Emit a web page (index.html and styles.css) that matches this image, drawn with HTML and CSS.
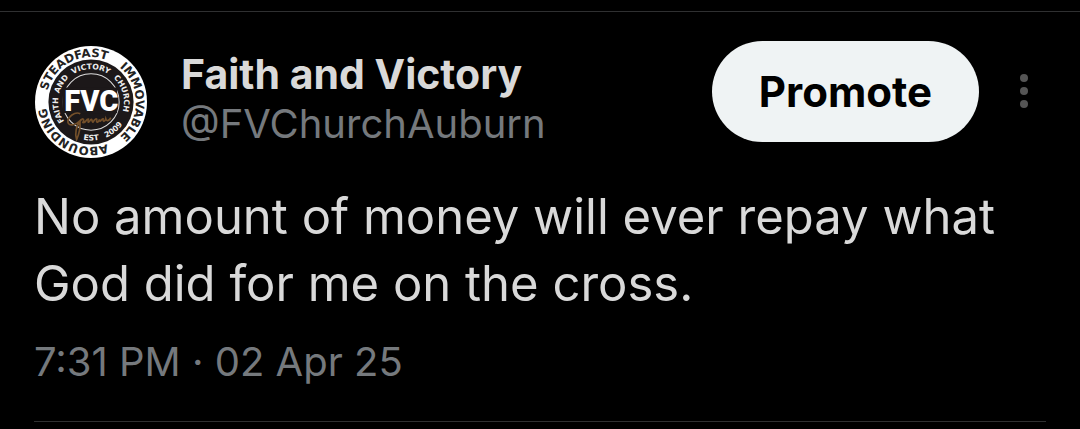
FILE: index.html
```html
<!DOCTYPE html>
<html lang="en">
<head>
<meta charset="utf-8">
<meta name="viewport" content="width=device-width, initial-scale=1">
<title>Faith and Victory</title>
<link rel="stylesheet" href="styles.css">
</head>
<body>
<article class="post">
  <header class="post-header">
    <svg class="avatar" viewBox="15 20 334 334" role="img" aria-label="Faith and Victory Church logo">
      <defs>
        <path id="outer" d="M182 321 A134 134 0 0 1 182 53 A134 134 0 0 1 182 321 A134 134 0 0 1 182 53"/>
        <path id="inner" d="M182 285 A98 98 0 0 1 182 89 A98 98 0 0 1 182 285"/>
        <path id="lower" d="M67 187 A115 115 0 0 0 297 187"/>
      </defs>
      <circle class="seal-light" cx="182" cy="187" r="167"/>
      <circle class="seal-dark" cx="182" cy="187" r="127"/>
      <circle class="seal-line" cx="182" cy="187" r="84"/>
      <g class="seal-motto">
        <text><textPath href="#outer" startOffset="357">STEADFAST</textPath></text>
        <text><textPath href="#outer" startOffset="631">IMMOVABLE</textPath></text>
        <text><textPath href="#outer" startOffset="914">ABOUNDING</textPath></text>
      </g>
      <g class="seal-name">
        <text><textPath href="#inner" startOffset="130">FAITH</textPath></text>
        <text><textPath href="#inner" startOffset="207">AND</textPath></text>
        <text><textPath href="#inner" startOffset="307">VICTORY</textPath></text>
        <text><textPath href="#inner" startOffset="435">CHURCH</textPath></text>
        <text><textPath href="#lower" startOffset="181">EST</textPath></text>
        <text><textPath href="#lower" startOffset="258">2009</textPath></text>
      </g>
      <rect class="seal-dark" x="96" y="144" width="164" height="76"/>
      <text class="seal-initials" x="183" y="214">FVC</text>
      <path class="seal-script" d="M150 222 C134 214 112 232 113 247 C116 262 139 254 149 243 C151 263 145 286 139 299 C133 283 138 256 150 244 C157 232 163 239 158 248 C167 251 167 237 174 238 C172 247 173 252 180 241 C187 233 184 248 188 247 C193 237 201 233 199 242 C197 250 205 249 207 239 C209 253 213 235 218 237 C217 248 224 246 226 237 C229 247 237 241 241 234"/>
    </svg>
    <div class="author">
      <a class="author-name" href="#">Faith and Victory</a>
      <a class="author-handle" href="#">@FVChurchAuburn</a>
    </div>
    <button class="promote" type="button">Promote</button>
    <button class="more" type="button" aria-label="More options">
      <svg class="more-icon" viewBox="0 0 8 34" aria-hidden="true">
        <circle cx="4" cy="4" r="4"/><circle cx="4" cy="17" r="4"/><circle cx="4" cy="30" r="4"/>
      </svg>
    </button>
  </header>
  <p class="post-text">No amount of money will ever repay what God did for me on the cross.</p>
  <time class="post-time" datetime="2025-04-02T19:31">7:31 PM · 02 Apr 25</time>
</article>
</body>
</html>
```
FILE: styles.css
```css
* { box-sizing: border-box; }

body {
  margin: 0;
  padding-top: 11px;
  background: #000;
  color: #d9d9d9;
  font-family: Inter, "Liberation Sans", sans-serif;
}

.post {
  display: flex;
  flex-direction: column;
  padding: 29px 34px 0;
  border-top: 1px solid #2f3031;
}

.post::after {
  content: "";
  height: 1px;
  margin-top: 34px;
  background: #2f3031;
}

.post-header {
  display: flex;
  align-items: flex-start;
}

.avatar {
  flex: none;
  width: 112px;
  height: 112px;
  margin: 5px 34px 0 1px;
}

.author {
  display: flex;
  flex: 1;
  flex-direction: column;
  padding-top: 8px;
}

.author a {
  font-size: 41px;
  line-height: 50px;
  text-decoration: none;
  white-space: nowrap;
}

.author .author-name { color: #d9d9d9; font-weight: 700; }
.author .author-handle { color: #75797d; font-size: 40px; }

.promote {
  padding: 0 47px;
  border: 0;
  border-radius: 51px;
  background: #eff3f4;
  color: #000;
  font: 700 42px/101px Inter, "Liberation Sans", sans-serif;
}

.more {
  display: flex;
  padding: 33px 18px 0 41px;
  border: 0;
  background: none;
}

.more-icon {
  width: 8px;
  height: 34px;
  fill: #555;
}

.post-text {
  margin: 25px 0 0;
  font-size: 49px;
  line-height: 67px;
}

.post-time {
  margin-top: 20px;
  color: #75797d;
  font-size: 40px;
  line-height: 50px;
}

.seal-light { fill: #fff; }
.seal-dark { fill: #1c1819; }
.seal-line { fill: none; stroke: #ddd; stroke-width: 3; }
.seal-motto { fill: #222; font: 700 35px "DejaVu Sans", sans-serif; text-anchor: middle; }
.seal-name { fill: #eee; font: 700 23px "DejaVu Sans", sans-serif; text-anchor: middle; }
.seal-initials { fill: #fff; font: 900 87px Roboto, sans-serif; text-anchor: middle; }
.seal-script { fill: none; stroke: #74502a; stroke-width: 5; }
```
